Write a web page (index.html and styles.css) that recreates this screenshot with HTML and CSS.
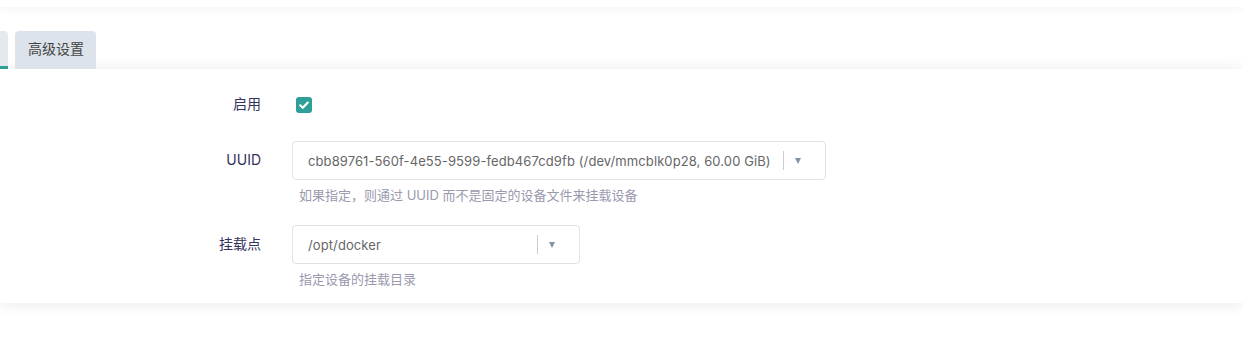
FILE: index.html
```html
<!DOCTYPE html>
<html lang="zh-CN">
<head>
<meta charset="utf-8">
<title>挂载点</title>
<link rel="stylesheet" href="styles.css">
</head>
<body>
<div class="top-card"></div>
<ul class="tabs">
  <li class="tab active"></li>
  <li class="tab">高级设置</li>
</ul>
<div class="card">
  <div class="row row-check">
    <label class="label">启用</label>
    <div class="field">
      <span class="checkbox"><svg viewBox="0 0 16 16" width="16" height="16"><path d="M4.2 8.3 L6.8 10.8 L11.8 5.6" fill="none" stroke="#fff" stroke-width="2.2" stroke-linecap="round" stroke-linejoin="round"/></svg></span>
    </div>
  </div>
  <div class="row">
    <label class="label">UUID</label>
    <div class="field">
      <div class="select wide">
        <span class="value">cbb89761-560f-4e55-9599-fedb467cd9fb (/dev/mmcblk0p28, 60.00 GiB)</span>
        <span class="sep"></span>
        <span class="arrow"></span>
      </div>
      <div class="help">如果指定，则通过 UUID 而不是固定的设备文件来挂载设备</div>
    </div>
  </div>
  <div class="row">
    <label class="label">挂载点</label>
    <div class="field">
      <div class="select narrow">
        <span class="value">/opt/docker</span>
        <span class="sep"></span>
        <span class="arrow"></span>
      </div>
      <div class="help">指定设备的挂载目录</div>
    </div>
  </div>
</div>
</body>
</html>
```
FILE: styles.css
```css
html, body {
  margin: 0;
  padding: 0;
  background: #fff;
  font-family: Inter, "Open Sans", "Noto Sans CJK SC", sans-serif;
}

body {
  height: 349px;
  overflow: hidden;
}

.top-card {
  height: 7px;
  background: #fff;
  box-shadow: 0 1px 8px rgba(30, 40, 60, 0.07);
  position: relative;
  z-index: 1;
}

.tabs {
  list-style: none;
  margin: 24px 0 0 0;
  padding: 0;
  display: flex;
  gap: 7px;
  height: 38px;
  position: relative;
  z-index: 2;
}

.tab {
  height: 38px;
  box-sizing: border-box;
  padding: 0 12px 0 13px;
  background: #dce3ea;
  border-radius: 4px 4px 0 0;
  font-size: 14px;
  line-height: 36px;
  color: #444;
  white-space: nowrap;
}

.tab.active {
  margin-left: -64px;
  width: 72px;
  background: #e4e9ee;
  border-bottom: 3px solid #2f9e97;
}

.card {
  background: #fff;
  box-shadow: 0 1px 14px rgba(30, 40, 60, 0.1);
  padding: 28px 0 0 0;
  height: 234px;
  box-sizing: border-box;
  position: relative;
  z-index: 1;
}

.row {
  display: flex;
  align-items: flex-start;
  margin-bottom: 21px;
}

.row-check {
  margin-bottom: 28px;
}

.label {
  width: 261px;
  text-align: right;
  font-size: 14px;
  color: #32325d;
  line-height: 38px;
  flex-shrink: 0;
}

.row-check .label {
  line-height: 14px;
}

.field {
  margin-left: 31px;
}

.checkbox {
  display: block;
  margin-left: 4px;
  width: 16px;
  height: 16px;
  border-radius: 3px;
  background: #2f9e97;
}

.checkbox svg {
  display: block;
}

.select {
  height: 39px;
  box-sizing: border-box;
  border: 1px solid #dfe3e8;
  border-radius: 4px;
  display: flex;
  align-items: center;
  padding-left: 15px;
  font-size: 13px;
  letter-spacing: 0.1px;
  color: #666;
}

.select.wide { width: 534px; }
.select.narrow { width: 288px; }

.value {
  flex: 1;
  white-space: nowrap;
  overflow: hidden;
}

.sep {
  width: 1px;
  height: 19px;
  background: #ccc;
  margin: 0 11px 0 9px;
}

.arrow {
  width: 0;
  height: 0;
  border-left: 3.5px solid transparent;
  border-right: 3.5px solid transparent;
  border-top: 6px solid #8392a5;
  margin-right: 24px;
}

.help {
  font-size: 13px;
  color: #9a9aae;
  margin: 7px 0 0 7px;
  line-height: 17px;
}
```
